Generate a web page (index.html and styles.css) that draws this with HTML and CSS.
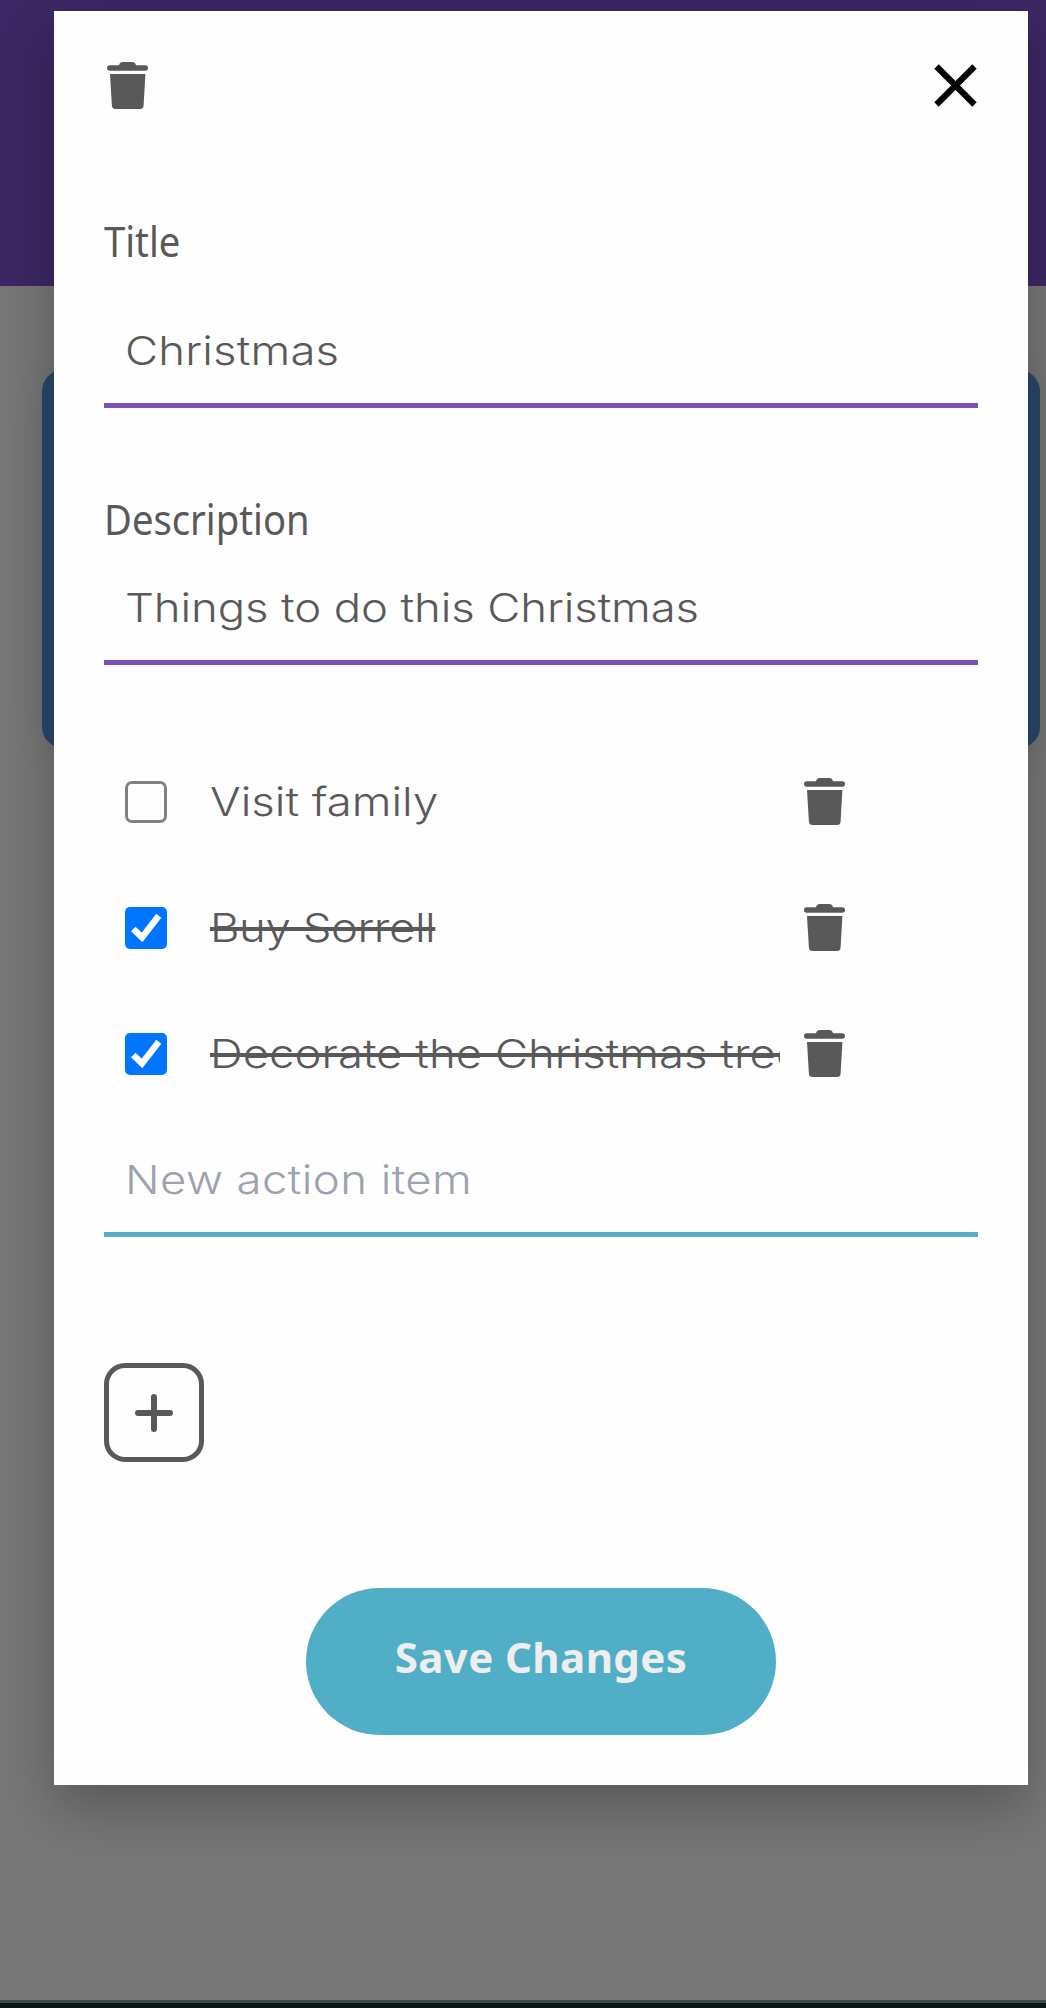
FILE: index.html
```html
<!DOCTYPE html>
<html lang="en">
<head>
<meta charset="utf-8">
<title>Edit list</title>
<link rel="stylesheet" href="styles.css">
</head>
<body>
<svg class="defs" width="0" height="0">
  <symbol id="trash" viewBox="0 0 41 47">
    <path d="M2.8 3.2H12C12.6 1.2 13.8 0 15.8 0H25.2C27.2 0 28.4 1.2 29 3.2H38.2A2.8 2.8 0 0 1 38.2 8.8H2.8A2.8 2.8 0 0 1 2.8 3.2Z"/>
    <path d="M3 12H38.4L36.6 43.6A3.5 3.5 0 0 1 33.1 47H8.4A3.5 3.5 0 0 1 4.9 43.6Z"/>
  </symbol>
</svg>
<div class="page">
  <header class="page-header"></header>
  <main class="page-main"><div class="page-card"></div></main>
  <footer class="page-footer"></footer>
</div>
<div class="overlay">
  <section class="modal">
    <div class="modal-bar">
      <svg class="trash"><use href="#trash"/></svg>
      <svg class="close" viewBox="0 0 43 43"><path d="M2.5 2.5L40.5 40.5M40.5 2.5L2.5 40.5"/></svg>
    </div>
    <div class="label label-title"><span class="narrow">Title</span></div>
    <div class="field"><span class="wide ls-a">Christmas</span></div>
    <div class="label label-desc"><span class="narrow">Description</span></div>
    <div class="field"><span class="wide ls-d">Things to do this Christmas</span></div>
    <div class="items">
      <div class="item">
        <span class="check"></span>
        <div class="item-text"><span class="wide">Visit family</span></div>
        <svg class="trash"><use href="#trash"/></svg>
      </div>
      <div class="item">
        <span class="check checked"><svg viewBox="0 0 42 42"><path d="M8.3 22L17 30.4L33.8 8.8"/></svg></span>
        <div class="item-text done"><span class="wide ls-b">Buy Sorrell</span></div>
        <svg class="trash"><use href="#trash"/></svg>
      </div>
      <div class="item">
        <span class="check checked"><svg viewBox="0 0 42 42"><path d="M8.3 22L17 30.4L33.8 8.8"/></svg></span>
        <div class="item-text done"><span class="wide">Decorate the Christmas tree</span></div>
        <svg class="trash"><use href="#trash"/></svg>
      </div>
    </div>
    <div class="field field-new"><span class="wide ls-c">New action item</span></div>
    <div class="add"><svg viewBox="0 0 38 38"><path d="M19 3V35M3 19H35"/></svg></div>
    <div class="save">Save Changes</div>
  </section>
</div>
</body>
</html>
```
FILE: styles.css
```css
* { box-sizing: border-box; }
body { margin: 0; color: #595959; }
.defs { position: absolute; }

.page { height: 2008px; display: flex; flex-direction: column; background: #777; overflow: hidden; }
.page-header { height: 286px; background: #3d2764; }
.page-main { flex: 1; padding: 84px 6px 0 42px; }
.page-card { height: 378px; border-radius: 21px; background: #294769; box-shadow: 0 6px 40px rgba(0, 0, 0, .06); }
.page-footer { height: 8px; border-top: 3px solid #3e4949; background: #0b1416; }

.overlay { position: absolute; inset: 0; padding: 11px 18px 0 54px; overflow: hidden; }
.modal {
  height: 1774px;
  padding: 50px;
  display: flex;
  flex-direction: column;
  background: #fefefe;
  box-shadow: 0 24px 52px rgba(0, 0, 0, .26);
}
.modal-bar { height: 49px; padding: 1px 1px 0 3px; display: flex; justify-content: space-between; }
.trash { width: 41px; height: 47px; fill: #595959; flex: none; }
.close { width: 43px; height: 43px; margin-top: 2px; fill: none; stroke: #000; stroke-width: 6.2; }

.label { height: 60px; font: 400 41px/60px "Noto Sans", sans-serif; }
.label-title { margin: 101px 0 28px; }
.label-desc { margin: 81px 0 7px; }
.narrow { display: inline-block; transform: scaleX(.932); transform-origin: 0 50%; }

.field {
  height: 109px;
  padding: 22px 21px;
  border-bottom: 5px solid #7952b9;
  font: 330 40px/60px Inter, sans-serif;
}
.field-new { margin-top: 11px; border-color: #56aec4; color: #9ca3af; }
.wide { display: inline-block; white-space: nowrap; transform: scaleX(1.138); transform-origin: 0 50%; }
.ls-a { letter-spacing: .15px; }
.ls-b { letter-spacing: -.4px; }
.ls-c { letter-spacing: .35px; }
.ls-d { letter-spacing: -.1px; }

.items { margin-top: 74px; }
.item { height: 126px; padding-left: 21px; display: flex; align-items: center; }
.item .trash { margin-bottom: 1px; }
.check { width: 42px; height: 42px; flex: none; border: 3px solid #808080; border-radius: 7px; }
.checked { border: 0; background: #0075ff; border-radius: 5px; }
.checked svg { display: block; fill: none; stroke: #fff; stroke-width: 6.4; }
.item-text {
  width: 570px;
  margin: 0 24px 0 43px;
  overflow: hidden;
  font: 330 40px/60px Inter, sans-serif;
}
.done .wide { text-decoration: line-through; text-decoration-thickness: 4px; }

.add {
  width: 100px;
  height: 99px;
  margin-top: 126px;
  display: grid;
  place-items: center;
  border: 5px solid #595959;
  border-radius: 21px;
}
.add svg { width: 38px; height: 38px; fill: none; stroke: #595959; stroke-width: 6; stroke-linecap: round; }
.save {
  width: 470px;
  height: 147px;
  margin: 126px auto 0;
  padding-top: 39px;
  border-radius: 74px;
  background: #50afc6;
  color: #eee;
  text-align: center;
  font: 700 42px/60px "Noto Sans", sans-serif;
  letter-spacing: .4px;
}
```
